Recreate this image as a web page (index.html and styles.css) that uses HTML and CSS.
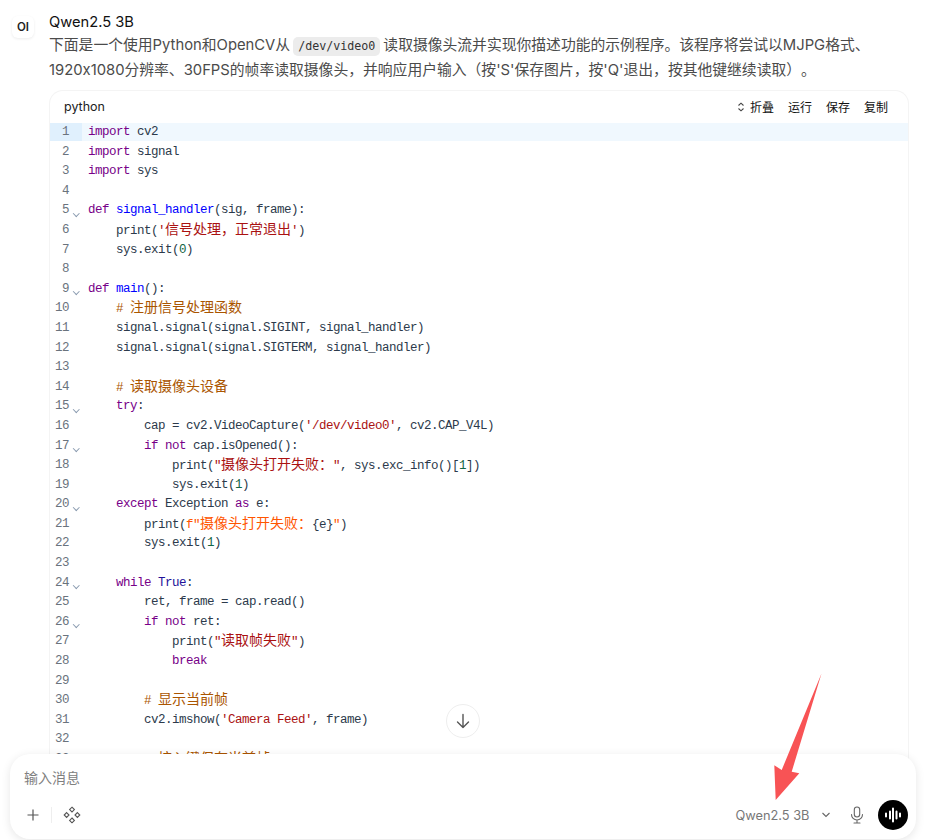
FILE: index.html
```html
<!DOCTYPE html>
<html lang="zh-CN">
<head>
    <meta charset="UTF-8">
    <meta name="viewport" content="width=device-width, initial-scale=1.0">
    <title>Qwen2.5 3B</title>
    <link rel="stylesheet" href="styles.css">
</head>
<body>
    <main class="message">
        <div class="avatar">OI</div>
        <div class="message-body">
            <div class="model-name">Qwen2.5 3B</div>
            <p class="intro">下面是一个使用Python和OpenCV从<code class="inline-code">/dev/video0</code>读取摄像头流并实现你描述功能的示例程序。该程序将尝试以MJPG格式、1920x1080分辨率、30FPS的帧率读取摄像头，并响应用户输入（按'S'保存图片，按'Q'退出，按其他键继续读取）。</p>

            <section class="code-card">
                <header class="code-header">
                    <span class="code-lang">python</span>
                    <div class="code-actions">
                        <span class="action action-fold">
                            <svg width="8" height="10" viewBox="0 0 8 10" fill="none" stroke="#444" stroke-width="1.1"><path d="M1.5 3.5 4 1.2l2.5 2.3M1.5 6.5 4 8.8l2.5-2.3"/></svg>
                            折叠
                        </span>
                        <span class="action">运行</span>
                        <span class="action">保存</span>
                        <span class="action">复制</span>
                    </div>
                </header>
                <div class="code">
                    <div class="line line-active"><span class="gutter"><span class="num">1</span><i class="fold"></i></span><span class="src"><b class="kw">import</b> cv2</span></div>
                    <div class="line"><span class="gutter"><span class="num">2</span><i class="fold"></i></span><span class="src"><b class="kw">import</b> signal</span></div>
                    <div class="line"><span class="gutter"><span class="num">3</span><i class="fold"></i></span><span class="src"><b class="kw">import</b> sys</span></div>
                    <div class="line"><span class="gutter"><span class="num">4</span><i class="fold"></i></span><span class="src"></span></div>
                    <div class="line"><span class="gutter"><span class="num">5</span><i class="fold open"></i></span><span class="src"><b class="kw">def</b> <b class="def">signal_handler</b>(sig, frame):</span></div>
                    <div class="line"><span class="gutter"><span class="num">6</span><i class="fold"></i></span><span class="src">    print(<b class="str">'<span class="zh">信号处理，正常退出</span>'</b>)</span></div>
                    <div class="line"><span class="gutter"><span class="num">7</span><i class="fold"></i></span><span class="src">    sys.exit(<b class="nr">0</b>)</span></div>
                    <div class="line"><span class="gutter"><span class="num">8</span><i class="fold"></i></span><span class="src"></span></div>
                    <div class="line"><span class="gutter"><span class="num">9</span><i class="fold open"></i></span><span class="src"><b class="kw">def</b> <b class="def">main</b>():</span></div>
                    <div class="line"><span class="gutter"><span class="num">10</span><i class="fold"></i></span><span class="src">    <b class="cm"># <span class="zh">注册信号处理函数</span></b></span></div>
                    <div class="line"><span class="gutter"><span class="num">11</span><i class="fold"></i></span><span class="src">    signal.signal(signal.SIGINT, signal_handler)</span></div>
                    <div class="line"><span class="gutter"><span class="num">12</span><i class="fold"></i></span><span class="src">    signal.signal(signal.SIGTERM, signal_handler)</span></div>
                    <div class="line"><span class="gutter"><span class="num">13</span><i class="fold"></i></span><span class="src"></span></div>
                    <div class="line"><span class="gutter"><span class="num">14</span><i class="fold"></i></span><span class="src">    <b class="cm"># <span class="zh">读取摄像头设备</span></b></span></div>
                    <div class="line"><span class="gutter"><span class="num">15</span><i class="fold open"></i></span><span class="src">    <b class="kw">try</b>:</span></div>
                    <div class="line"><span class="gutter"><span class="num">16</span><i class="fold"></i></span><span class="src">        cap = cv2.VideoCapture(<b class="str">'/dev/video0'</b>, cv2.CAP_V4L)</span></div>
                    <div class="line"><span class="gutter"><span class="num">17</span><i class="fold open"></i></span><span class="src">        <b class="kw">if</b> <b class="kw">not</b> cap.isOpened():</span></div>
                    <div class="line"><span class="gutter"><span class="num">18</span><i class="fold"></i></span><span class="src">            print(<b class="str">"<span class="zh">摄像头打开失败：</span>"</b>, sys.exc_info()[<b class="nr">1</b>])</span></div>
                    <div class="line"><span class="gutter"><span class="num">19</span><i class="fold"></i></span><span class="src">            sys.exit(<b class="nr">1</b>)</span></div>
                    <div class="line"><span class="gutter"><span class="num">20</span><i class="fold open"></i></span><span class="src">    <b class="kw">except</b> Exception <b class="kw">as</b> e:</span></div>
                    <div class="line"><span class="gutter"><span class="num">21</span><i class="fold"></i></span><span class="src">        print(<b class="fstr">f"<span class="zh">摄像头打开失败：</span></b>{e}<b class="fstr">"</b>)</span></div>
                    <div class="line"><span class="gutter"><span class="num">22</span><i class="fold"></i></span><span class="src">        sys.exit(<b class="nr">1</b>)</span></div>
                    <div class="line"><span class="gutter"><span class="num">23</span><i class="fold"></i></span><span class="src"></span></div>
                    <div class="line"><span class="gutter"><span class="num">24</span><i class="fold open"></i></span><span class="src">    <b class="kw">while</b> <b class="atom">True</b>:</span></div>
                    <div class="line"><span class="gutter"><span class="num">25</span><i class="fold"></i></span><span class="src">        ret, frame = cap.read()</span></div>
                    <div class="line"><span class="gutter"><span class="num">26</span><i class="fold open"></i></span><span class="src">        <b class="kw">if</b> <b class="kw">not</b> ret:</span></div>
                    <div class="line"><span class="gutter"><span class="num">27</span><i class="fold"></i></span><span class="src">            print(<b class="str">"<span class="zh">读取帧失败</span>"</b>)</span></div>
                    <div class="line"><span class="gutter"><span class="num">28</span><i class="fold"></i></span><span class="src">            <b class="kw">break</b></span></div>
                    <div class="line"><span class="gutter"><span class="num">29</span><i class="fold"></i></span><span class="src"></span></div>
                    <div class="line"><span class="gutter"><span class="num">30</span><i class="fold"></i></span><span class="src">        <b class="cm"># <span class="zh">显示当前帧</span></b></span></div>
                    <div class="line"><span class="gutter"><span class="num">31</span><i class="fold"></i></span><span class="src">        cv2.imshow(<b class="str">'Camera Feed'</b>, frame)</span></div>
                    <div class="line"><span class="gutter"><span class="num">32</span><i class="fold"></i></span><span class="src"></span></div>
                    <div class="line"><span class="gutter"><span class="num">33</span><i class="fold"></i></span><span class="src">        <b class="cm"># <span class="zh">按入键保存当前帧</span></b></span></div>
                </div>
            </section>
        </div>
    </main>

    <button class="scroll-down" aria-label="滚动到底部">
        <svg width="18" height="18" viewBox="0 0 18 18" fill="none" stroke="#555" stroke-width="1.4" stroke-linecap="round" stroke-linejoin="round"><path d="M9 2.5v13M3.5 10 9 15.5l5.5-5.5"/></svg>
    </button>

    <footer class="composer">
        <div class="placeholder">输入消息</div>
        <div class="composer-bar">
            <div class="tools">
                <svg width="14" height="14" viewBox="0 0 14 14" fill="none" stroke="#555" stroke-width="1.2"><path d="M7 1.5v11M1.5 7h11"/></svg>
                <span class="divider"></span>
                <svg width="18" height="18" viewBox="0 0 18 18" fill="none" stroke="#555" stroke-width="1.1"><path d="m9 1.2 2.4 2.400L9 6 6.600 3.600zM14.400 6.600 16.800 9l-2.400 2.400L12 9zM3.600 6.600 6 9l-2.400 2.400L1.200 9zM9 12l2.400 2.400L9 16.800l-2.400-2.400z"/></svg>
            </div>
            <div class="model-picker">
                <span class="model-label">Qwen2.5 3B</span>
                <svg width="10" height="6" viewBox="0 0 10 6" fill="none" stroke="#666" stroke-width="1.1"><path d="m1.5 1 3.5 3.5L8.500 1"/></svg>
                <svg class="mic" width="14" height="18" viewBox="0 0 14 18" fill="none" stroke="#666" stroke-width="1.1" stroke-linecap="round"><rect x="4.300" y="1" width="5.400" height="10" rx="2.700"/><path d="M1.500 8.500a5.500 5.500 0 0 0 11 0M7 14v3M4 17h6"/></svg>
                <span class="voice">
                    <svg width="18" height="16" viewBox="0 0 18 16" stroke="#fff" stroke-width="2" stroke-linecap="round"><path d="M2 6.500v3M6 4.500v7M9 1.500v13M12.500 4.500v7M16 6.500v3"/></svg>
                </span>
            </div>
        </div>
    </footer>

    <svg class="annotation" width="60" height="136" viewBox="770 670 60 136"><polygon points="821.500,673.500 791.700,771.700 799.300,773.300 775.700,800 774.300,765.300 781.700,770" fill="#f85355"/></svg>
</body>
</html>
```

FILE: styles.css
```css
* {
    box-sizing: border-box;
}
html, body {
    height: 100%;
}
body {
    margin: 0;
    overflow: hidden;
    position: relative;
    background: #fff;
    font-family: Inter, "Noto Sans CJK SC", sans-serif;
    text-spacing-trim: space-all;
    color: #111;
}
.message {
    display: flex;
    gap: 15px;
    padding: 12px 36px 0 12px;
}
.avatar {
    flex: none;
    width: 22px;
    height: 22px;
    margin-top: 4px;
    border-radius: 6px;
    background: #fff;
    box-shadow: 0 1px 3px rgba(0, 0, 0, 0.08);
    font-size: 11.500px;
    font-weight: 600;
    line-height: 22px;
    text-align: center;
    color: #222;
}
.message-body {
    flex: 1;
    min-width: 0;
}
.model-name {
    font-size: 14.7px;
    line-height: 20px;
    color: #111;
}
.intro {
    margin: 1px 0 0;
    font-size: 14.8px;
    line-height: 24.5px;
    color: #4b4b4b;
}
.inline-code {
    display: inline-block;
    margin: 0 3px;
    padding: 0 5px;
    border-radius: 5px;
    background: #ececec;
    font-family: "DejaVu Sans Mono", monospace;
    font-size: 11.67px;
    line-height: 19px;
    color: #333;
}
.code-card {
    margin-top: 8px;
    border: 1px solid #f4f4f4;
    border-bottom: 0;
    border-radius: 14px 14px 0 0;
}
.code-header {
    display: flex;
    justify-content: space-between;
    align-items: center;
    height: 31px;
    margin-bottom: 1px;
    padding: 0 20px 0 14px;
    font-size: 12.5px;
    color: #222;
}
.code-actions {
    display: flex;
    gap: 14px;
}
.action {
    display: flex;
    align-items: center;
    gap: 5px;
    font-size: 12px;
    color: #111;
}
.code {
    font-family: "Liberation Mono", "Noto Sans CJK SC", monospace;
    font-size: 12.5px;
    letter-spacing: -0.5px;
    color: #2c3a4b;
}
.line {
    display: flex;
    height: 19.6px;
    line-height: 18px;
}
.line-active {
    padding-bottom: 1.600px;
    background: #f0f8fe;
    background-clip: content-box;
}
.line-active .gutter {
    background: #e0f0fd;
}
.gutter {
    flex: none;
    display: flex;
    width: 32px;
    margin-right: 6px;
    color: #6a737d;
}
.num {
    width: 19px;
    text-align: right;
}
.fold {
    position: relative;
    flex: none;
    width: 13px;
}
.fold.open::after {
    content: "";
    position: absolute;
    left: 5px;
    top: 9.500px;
    width: 3.500px;
    height: 3.500px;
    border-right: 1px solid #8a9bb0;
    border-bottom: 1px solid #8a9bb0;
    transform: rotate(45deg);
}
.src {
    white-space: pre;
}
.src b {
    font-weight: 400;
}
.zh {
    font-size: 14px;
    letter-spacing: 0;
}
.kw {
    color: #770088;
}
.def {
    color: #0000ff;
}
.str {
    color: #aa1111;
}
.fstr {
    color: #ff5500;
}
.nr {
    color: #116644;
}
.cm {
    color: #aa5500;
}
.atom {
    color: #221199;
}
.scroll-down {
    position: absolute;
    left: 446px;
    top: 704px;
    display: flex;
    align-items: center;
    justify-content: center;
    width: 34px;
    height: 34px;
    padding: 0;
    border: 1px solid #eeeeee;
    border-radius: 50%;
    background: #fff;
}
.composer {
    position: absolute;
    left: 10px;
    top: 754px;
    width: 906px;
    height: 85px;
    padding: 14px 8px 0 14px;
    border-radius: 20px;
    background: #fff;
    box-shadow: 0 2px 10px rgba(0, 0, 0, 0.1);
}
.placeholder {
    font-size: 14px;
    line-height: 20px;
    color: #808080;
}
.composer-bar {
    display: flex;
    justify-content: space-between;
    align-items: center;
    margin-top: 12px;
}
.tools {
    display: flex;
    align-items: center;
    gap: 11px;
    padding-left: 2px;
}
.divider {
    width: 1px;
    height: 16px;
    background: #eeeeee;
}
.model-picker {
    display: flex;
    align-items: center;
}
.model-label {
    margin-right: 11px;
    font-size: 12.800px;
    color: #777;
}
.mic {
    margin: 0 14.500px 0 19px;
}
.voice {
    display: flex;
    align-items: center;
    justify-content: center;
    width: 30px;
    height: 30px;
    border-radius: 50%;
    background: #000;
}
.annotation {
    position: absolute;
    left: 770px;
    top: 670px;
}
```
